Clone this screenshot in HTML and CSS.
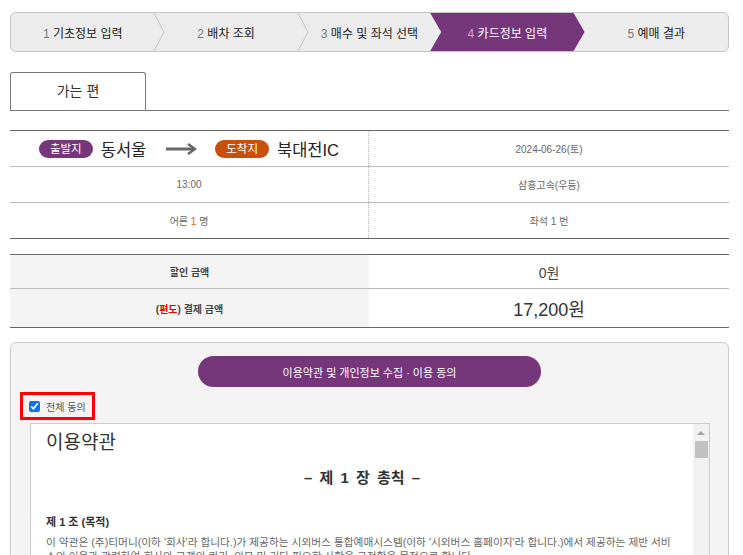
FILE: index.html
```html
<!DOCTYPE html>
<html lang="ko">
<head>
    <meta charset="UTF-8">
    <meta name="viewport" content="width=device-width, initial-scale=1.0">
    <title>승차권 예매 - 카드정보 입력</title>
    <link rel="stylesheet" href="styles.css">
</head>
<body>

<div class="page">

    <!-- 예매 단계 -->
    <ol class="steps">
        <li class="step"><span class="label"><span class="num">1</span> 기초정보 입력</span>
            <svg class="sep" width="12" height="40" viewBox="0 0 12 40"><polyline points="0.5,0 11,20 0.5,40" fill="none" stroke="#c6c6c6" stroke-width="1"/></svg>
        </li>
        <li class="step"><span class="label"><span class="num">2</span> 배차 조회</span>
            <svg class="sep" width="12" height="40" viewBox="0 0 12 40"><polyline points="0.5,0 11,20 0.5,40" fill="none" stroke="#c6c6c6" stroke-width="1"/></svg>
        </li>
        <li class="step"><span class="label"><span class="num">3</span> 매수 및 좌석 선택</span>
            <svg class="sep" width="12" height="40" viewBox="0 0 12 40"><polyline points="0.5,0 11,20 0.5,40" fill="none" stroke="#c6c6c6" stroke-width="1"/></svg>
        </li>
        <li class="step active"><span class="label"><span class="num">4</span> 카드정보 입력</span></li>
        <li class="step"><span class="label"><span class="num">5</span> 예매 결과</span></li>
    </ol>

    <!-- 가는 편 탭 -->
    <div class="tabs">
        <div class="tab">가는 편</div>
    </div>

    <!-- 배차 정보 -->
    <div class="route">
        <div class="cell cell-left route-main">
            <span class="badge badge-dep">출발지</span>
            <span class="place">동서울</span>
            <svg class="arrow" width="31" height="12" viewBox="0 0 31 12">
                <line x1="0" y1="6" x2="28" y2="6" stroke="#666" stroke-width="3"/>
                <polyline points="22,1 29,6 22,11" fill="none" stroke="#666" stroke-width="2.5"/>
            </svg>
            <span class="badge badge-arr">도착지</span>
            <span class="place">북대전IC</span>
        </div>
        <div class="cell"><span>2024-06-26(토)</span></div>
        <div class="cell cell-left"><span>13:00</span></div>
        <div class="cell"><span>삼흥고속(우등)</span></div>
        <div class="cell cell-left"><span>어른 <span class="hl">1</span> 명</span></div>
        <div class="cell"><span>좌석 1 번</span></div>
    </div>

    <!-- 결제 금액 -->
    <div class="price">
        <div class="price-label"><span>할인 금액</span></div>
        <div class="price-value">0원</div>
        <div class="price-label row2"><span>(<span class="red">편도</span>) 결제 금액</span></div>
        <div class="price-value row2 total">17,200원</div>
    </div>

    <!-- 약관 동의 -->
    <div class="terms">
        <div class="terms-head">
            <div class="terms-btn">이용약관 및 개인정보 수집 · 이용 동의</div>
        </div>
        <label class="agree-all"><input type="checkbox" checked> 전체 동의</label>

        <div class="terms-body">
            <div class="terms-text">
                <h2>이용약관</h2>
                <h3>– 제 1 장 총칙 –</h3>
                <h4>제 1 조 (목적)</h4>
                <p>이 약관은 (주)티머니(이하 '회사'라 합니다.)가 제공하는 시외버스 통합예매시스템(이하 '시외버스 홈페이지'라 합니다.)에서 제공하는 제반 서비스의 이용과 관련하여 회사와 고객의 권리, 의무 및 기타 필요한 사항을 규정함을 목적으로 합니다.</p>
            </div>
            <div class="scrollbar">
                <span class="scroll-up"></span>
                <span class="scroll-thumb"></span>
            </div>
        </div>
    </div>

</div>

</body>
</html>
```

FILE: styles.css
```css
/* General styles */
html, body {
    margin: 0;
    padding: 0;
    overflow: hidden;
    background: #fff;
}

body {
    font-family: "Liberation Sans", "Noto Sans CJK KR", sans-serif;
    color: #333;
    font-size: 11px;
}

.page {
    width: 719px;
    margin: 12px 0 0 10px;
}

/* Steps */
.steps {
    list-style: none;
    margin: 0;
    padding: 0;
    height: 38px;
    display: grid;
    grid-template-columns: repeat(5, 1fr);
    background-color: #ececec;
    border: 1px solid #c6c6c6;
    border-radius: 6px;
    overflow: hidden;
}

.step {
    position: relative;
    display: flex;
    align-items: center;
    justify-content: center;
    font-size: 12px;
    color: #222;
}

.step .label {
    white-space: nowrap;
}

.step .num {
    color: #777;
}

.step .sep {
    position: absolute;
    right: -11px;
    top: -1px;
    z-index: 1;
}

.step.active {
    margin-left: -11px;
    background-color: #76367a;
    color: #fff;
    z-index: 2;
    clip-path: polygon(0 0, calc(100% - 11px) 0, 100% 50%, calc(100% - 11px) 100%, 0 100%, 11px 50%);
}

.step.active .num {
    color: #d9a3dc;
}

/* Tab */
.tabs {
    margin-top: 20px;
    border-bottom: 1px solid #777;
}

.tab {
    width: 134px;
    height: 34px;
    padding-bottom: 3px;
    border: 1px solid #777;
    border-bottom: none;
    border-radius: 3px 3px 0 0;
    display: flex;
    align-items: center;
    justify-content: center;
    font-size: 14px;
    color: #333;
}

/* Route table */
.route {
    margin-top: 19px;
    display: grid;
    grid-template-columns: 359px 360px;
    border-top: 1px solid #666;
    border-bottom: 1px solid #666;
}

.cell {
    height: 35px;
    display: flex;
    align-items: center;
    justify-content: center;
    font-size: 10px;
    color: #666;
    border-top: 1px solid #bbb;
}

.cell:nth-child(1),
.cell:nth-child(2) {
    border-top: none;
}

.cell-left {
    border-right: 1px dotted #bbb;
}

.route-main {
    font-size: 16.5px;
    color: #222;
}

.badge {
    display: inline-block;
    height: 18px;
    line-height: 18px;
    padding: 0 11px;
    border-radius: 9px;
    color: #fff;
    font-size: 11.5px;
}

.badge-dep {
    background-color: #76367a;
}

.badge-arr {
    background-color: #c9500c;
}

.place {
    margin-left: 8px;
}

.arrow {
    margin: 0 18px 0 20px;
}

.hl {
    color: #e85c0d;
}

/* Price table */
.price {
    margin-top: 15px;
    display: grid;
    grid-template-columns: 359px 360px;
    border-top: 1px solid #666;
    border-bottom: 1px solid #666;
}

.price-label,
.price-value {
    display: flex;
    align-items: center;
    justify-content: center;
    height: 33px;
}

.price-label {
    background-color: #f4f4f4;
    font-size: 10px;
    font-weight: bold;
    color: #444;
}

.price-value {
    font-size: 14px;
    color: #444;
}

.row2 {
    border-top: 1px solid #bbb;
    height: 38px;
}

.price-value.total {
    font-size: 18px;
    color: #333;
}

.red {
    color: #ee0000;
}

/* Terms */
.terms {
    margin-top: 14px;
    background-color: #f4f4f4;
    border: 1px solid #ccc;
    border-radius: 6px;
    padding: 13px 18px 0 9px;
}

.terms-head {
    display: flex;
    justify-content: center;
    padding-left: 9px;
}

.terms-btn {
    width: 343px;
    height: 31px;
    border-radius: 16px;
    background-color: #76367a;
    color: #fff;
    font-size: 11px;
    display: flex;
    align-items: center;
    justify-content: center;
}

.agree-all {
    display: inline-flex;
    align-items: center;
    margin-top: 5px;
    height: 22px;
    padding: 0 6px 0 6px;
    border: 3px solid #ff0000;
    font-size: 10px;
    color: #555;
}

.agree-all input {
    width: 11px;
    height: 11px;
    margin: 0 6px 0 0;
}

.terms-body {
    margin: 3px 0 0 10px;
    height: 180px;
    background: #fff;
    border: 1px solid #ccc;
    border-bottom: none;
    display: flex;
}

.terms-text {
    flex: 1;
    padding: 0 15px 0 15px;
    overflow: hidden;
}

.terms-text h2 {
    margin: 7px 0 0;
    font-size: 19px;
    font-weight: normal;
    color: #333;
    line-height: 24px;
}

.terms-text h3 {
    margin: 13px 0 0;
    text-align: center;
    font-size: 15px;
    color: #333;
    word-spacing: 3px;
    line-height: 20px;
}

.terms-text h4 {
    margin: 26px 0 0;
    font-size: 11px;
    color: #333;
    line-height: 16px;
}

.terms-text p {
    margin: 5px 0 0;
    font-size: 10.7px;
    line-height: 14px;
    color: #666;
}

.scrollbar {
    width: 16px;
    background-color: #f1f1f1;
    display: flex;
    flex-direction: column;
    align-items: center;
}

.scroll-up {
    margin-top: 7px;
    width: 0;
    height: 0;
    border-left: 4px solid transparent;
    border-right: 4px solid transparent;
    border-bottom: 4px solid #a3a3a3;
}

.scroll-thumb {
    margin-top: 6px;
    width: 13px;
    height: 17px;
    background-color: #c1c1c1;
}
```
